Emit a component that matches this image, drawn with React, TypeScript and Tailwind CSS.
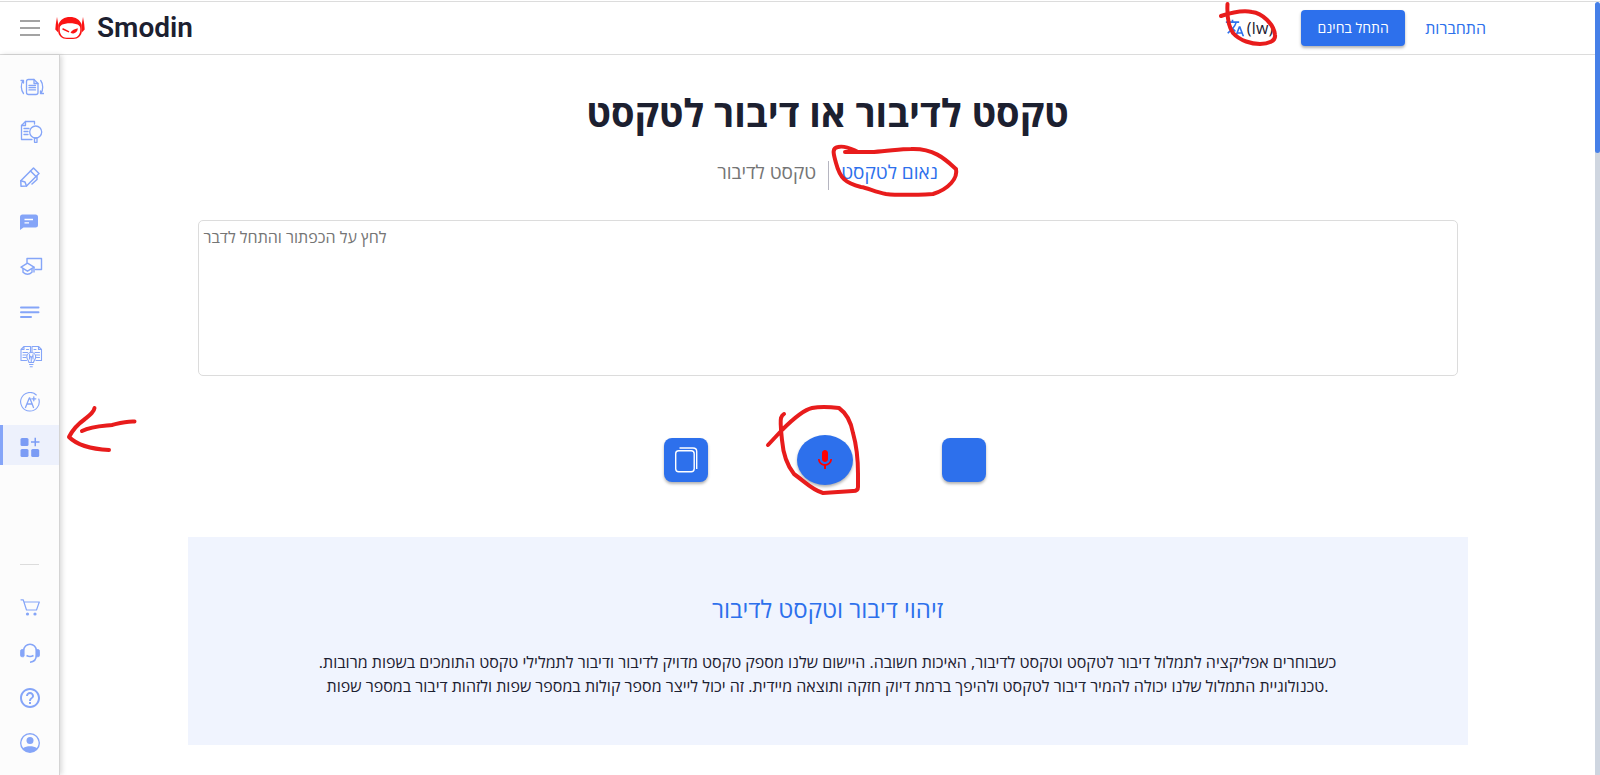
import React from 'react';
import { MdHelpOutline, MdTranslate, MdMic } from 'react-icons/md';

const LogoIcon = () => (
  <svg viewBox="0 0 30 24" className="w-[30px] h-6" fill="none">
    <path d="M2 1L3.200 8V16.500L0.300 13.500L0.800 8Z" fill="#fb1313" />
    <path d="M28 1L26.800 8V16.500L29.700 13.500L29.200 8Z" fill="#fb1313" />
    <path d="M3.200 9C5 3.500 9.500 1 15 1S25 3.500 26.800 9V15C26.800 19.500 23 23 18 23H12C7 23 3.200 19.500 3.200 15Z" fill="#fb1313" />
    <path d="M4.800 12C4.800 9.500 7.500 8.200 10.500 7.800C13.500 7.200 16.500 7.200 19.500 7.800C22.500 8.200 25.200 9.500 25.200 12C25.800 17 23.500 21.800 18.500 21.800H11.500C6.500 21.800 4.200 17 4.800 12Z" fill="#fff" />
    <path d="M8 13L13.500 15.700" stroke="#fb1313" strokeWidth="1.500" strokeLinecap="round" />
    <path d="M15.500 16.500C17 14.500 19.500 13 22.800 12.300C22.800 15 21 17.200 18.500 17.400C17.200 17.500 16.200 17.200 15.500 16.500Z" fill="#fb1313" />
  </svg>
);

const iconProps = {
  viewBox: '0 0 24 24',
  fill: 'none',
  stroke: 'currentColor',
  strokeWidth: 1.3,
  strokeLinecap: 'round' as const,
  strokeLinejoin: 'round' as const,
  className: 'w-6 h-6',
};

const RewriteIcon = () => (
  <svg {...iconProps}>
    <path d="M8.500 4.500H14L18 8.500V17.500Q18 19.500 16 19.500H8.500Q6.500 19.500 6.500 17.500V6.500Q6.500 4.500 8.500 4.500Z" />
    <path d="M14 4.500V8.500H18M9 10.500H15.500M9 12.700H15.500M9 14.900H15.500" />
    <path d="M3.500 18.500C0.700 15 0.700 9 3 5.500M1 5.500H3.500V8" />
    <path d="M20.700 5.500C23.300 9 23.300 15 21 18.500M23.500 18.500H20.500V16" />
  </svg>
);

const PlagiarismIcon = () => (
  <svg {...iconProps}>
    <path d="M14.500 4V1.500H5.500L1.500 5.500V19.500H12" />
    <path d="M5.500 1.500V5.500H1.500M4 8.500H9M4 11.500H8M4 14.500H8" />
    <circle cx="15.700" cy="12" r="6" />
    <path d="M14.500 18H17V22.300H14.500Z" />
  </svg>
);

const PencilIcon = () => (
  <svg {...iconProps} viewBox="0 0 20 20" strokeWidth={1.500} className="w-5 h-5">
    <path d="M13.500 1L19 6.500L6.500 19L1 19.200L0.800 13.800Z" />
    <path d="M10.500 4L16 9.500M0.800 13.800L5 15L6.500 19M17 9.500V12.500L12 17" />
  </svg>
);

const ChatIcon = () => (
  <svg viewBox="0 0 20 20" className="w-5 h-5">
    <path d="M2.500 2.500H15.500Q18 2.500 18 5V13Q18 15.500 15.500 15.500H3.500L0 18V5Q0 2.500 2.500 2.500Z" fill="currentColor" />
    <path d="M4.500 7.500H13M4.500 10.800H9" stroke="#fff" strokeWidth="1.300" />
  </svg>
);

const TutorIcon = () => (
  <svg {...iconProps} strokeWidth={1.400}>
    <path d="M7 7.500V3.500H21.500V14.500H15.500" />
    <path d="M1 12.200L7.500 8.200L14 12.200L7.500 16.200Z" />
    <path d="M3 14V17.200Q7.500 21.200 12 17.200V14M14 12.200V17" />
  </svg>
);

const NotesIcon = () => (
  <svg viewBox="0 0 20 20" className="w-5 h-5" stroke="currentColor" strokeWidth="2" strokeLinecap="round">
    <path d="M1 5.500H18.500M1 10.200H18.500M1 15H11" />
  </svg>
);

const ResearchIcon = () => (
  <svg {...iconProps} strokeWidth={1.100}>
    <path d="M10.500 7V1.500H4L1 4.500V15.500H6.500M4 1.500V4.500H1" />
    <path d="M12 7V1.500H18.500L21.500 4.500V15.500H16M18.500 1.500V4.500H21.500" />
    <path d="M3 7.500H7.500M3 10H6.500M3 12.500H6M15 7.500H19.500M16 10H19.500M16.500 12.500H19.500M6.500 4.500H8.500M14 4.500H16" />
    <path d="M9 17.500C9 15.500 6.800 14.500 6.800 12A4.400 4.400 0 0 1 15.700 12C15.700 14.500 13.500 15.500 13.500 17.500Z" />
    <path d="M9.500 19.500H13M10.200 21.800H12.300M11.250 17.500V12.500M9.800 11L11.250 12.500L12.700 11M9.500 9.500V14M13 9.500V14" />
  </svg>
);

const GraderIcon = () => (
  <svg {...iconProps} viewBox="0 0 20 20" strokeWidth={1.100} className="w-5 h-5">
    <path d="M16.300 3A9.300 9.300 0 1 0 18.800 7" />
    <path d="M5.500 15.500L9.300 6H9.800L13.500 15.500M6.800 12H12.300M13.800 4.800V8.800M11.800 6.800H15.800" strokeWidth="1.300" />
  </svg>
);

const AppsIcon = () => (
  <svg viewBox="0 0 20 20" className="w-5 h-5" fill="currentColor">
    <rect x="0.500" y="1" width="8" height="8" rx="1.500" />
    <rect x="0.500" y="12" width="8" height="8" rx="1.500" />
    <rect x="11.200" y="12" width="8" height="8" rx="1.500" />
    <path d="M14.500 0.800H16V4.200H19.500V5.700H16V9.200H14.500V5.700H11V4.200H14.500Z" />
  </svg>
);

const CartIcon = () => (
  <svg {...iconProps} viewBox="0 0 20 20" strokeWidth={1.200} className="w-5 h-5">
    <path d="M1 1.800H3.200L6.500 12H16.500L19.300 4H4" />
    <circle cx="7.500" cy="16" r="1.600" fill="currentColor" stroke="none" />
    <circle cx="15" cy="16" r="1.600" fill="currentColor" stroke="none" />
  </svg>
);

const SupportIcon = () => (
  <svg viewBox="0 0 20 20" className="w-5 h-5" fill="none" stroke="currentColor" strokeWidth="1.600">
    <path d="M3.700 13V7.500A6.300 6.300 0 0 1 16.300 7.500V12Q16.300 18.800 10 19.200" />
    <path d="M6.500 12.500Q10 14.500 13.500 12.500" />
    <path d="M3.700 6.500V13.800H2Q0.500 13.800 0.500 12.300V8.300Q0.500 6.500 2 6.500ZM16.300 6.500V13.800H18Q19.500 13.800 19.500 12.300V8.300Q19.500 6.500 18 6.500Z" fill="currentColor" strokeWidth="0.800" />
  </svg>
);

const AccountIcon = () => (
  <svg viewBox="0 0 20 20" className="w-5 h-5" fill="currentColor">
    <path fillRule="evenodd" d="M10 0A10 10 0 1 0 10 20A10 10 0 1 0 10 0ZM10 1.600A8.400 8.400 0 0 1 16.800 15C13.500 12.600 6.500 12.600 3.200 15A8.400 8.400 0 0 1 10 1.600Z" />
    <circle cx="10" cy="7.500" r="3.500" />
  </svg>
);

const CopyIcon = () => (
  <svg viewBox="0 0 24 26" className="w-6 h-[26px]" fill="none" stroke="#fff" strokeWidth="1.400">
    <rect x="1.700" y="3.700" width="18.500" height="21" rx="3" />
    <path d="M5.500 1H19Q22.700 1 22.700 4.500V22" />
  </svg>
);

interface NavItem {
  label: string;
  icon: React.ReactNode;
  active?: boolean;
}

const TOOLS: NavItem[] = [
  { label: 'Rewriter', icon: <RewriteIcon /> },
  { label: 'Plagiarism', icon: <PlagiarismIcon /> },
  { label: 'Writer', icon: <PencilIcon /> },
  { label: 'Chat', icon: <ChatIcon /> },
  { label: 'Tutor', icon: <TutorIcon /> },
  { label: 'Summarizer', icon: <NotesIcon /> },
  { label: 'Research', icon: <ResearchIcon /> },
  { label: 'Grader', icon: <GraderIcon /> },
  { label: 'Apps', icon: <AppsIcon />, active: true },
];

const ACCOUNT: NavItem[] = [
  { label: 'Pricing', icon: <CartIcon /> },
  { label: 'Support', icon: <SupportIcon /> },
  { label: 'Help', icon: <MdHelpOutline className="-ml-0.5 h-6 w-6" /> },
  { label: 'Account', icon: <AccountIcon /> },
];

const NavList: React.FC<{ items: NavItem[] }> = ({ items }) => (
  <ul className="flex flex-col gap-[5px]">
    {items.map(item => (
      <li key={item.label}>
        <a
          href="#"
          aria-label={item.label}
          className={
            item.active
              ? 'flex h-10 items-center border-l-[3px] border-[#85a5f8] bg-[#edf1fc] pl-[17px] pt-1 text-[#7b9cf5]'
              : 'flex h-10 items-center pl-5 pt-1 text-[#85a5f8]'
          }
        >
          {item.icon}
        </a>
      </li>
    ))}
  </ul>
);

const Header = () => (
  <header className="mt-px flex h-[54px] items-center justify-between border-y border-[#dcdcdc] bg-white pl-5 pr-[114px]">
    <div className="flex items-center">
      <button aria-label="Menu" className="flex w-5 flex-col gap-[5px]">
        <span className="h-[2px] bg-[#a3a3a3]" />
        <span className="h-[2px] bg-[#a3a3a3]" />
        <span className="h-[2px] bg-[#a3a3a3]" />
      </button>
      <a href="#" className="ml-[15px] flex items-center gap-3 font-['Roboto'] text-[28px] font-semibold text-[#1c2030]">
        <LogoIcon />
        Smodin
      </a>
    </div>
    <div className="flex items-center">
      <button className="mr-7 flex items-center gap-0.5 text-base text-[#1c2030]">
        <MdTranslate className="h-5 w-5 text-[#2d70ec]" />
        (Iw)
      </button>
      <button className="mr-5 h-9 w-[104px] rounded bg-[#2d70ec] text-sm font-medium text-white shadow-[0_2px_3px_rgba(0,0,0,0.3)]">
        התחל בחינם
      </button>
      <a href="#" className="text-base text-[#2d70ec]">התחברות</a>
    </div>
  </header>
);

// Hand-drawn red marker strokes, laid over the page
const MarkerStrokes = () => (
  <svg
    viewBox="0 0 1600 775"
    className="pointer-events-none absolute left-0 top-0 z-20 h-[775px] w-[1600px]"
    fill="none"
    stroke="#e81c1c"
    strokeWidth="4"
    strokeLinecap="round"
    strokeLinejoin="round"
  >
    <path d="M1227.500 4C1227 14 1228 26 1233 33C1240 41 1252 44 1260 44C1268 44 1276 41 1275 35C1274 24 1262 13 1252 12C1242 10 1230 13 1221 16" />
    <path d="M845 152H874C890 151 900 149 911 149C935 148 947 161 956 169C958 178 949 189 933 194C915 195 895 195 886 194C875 192 868 188 861 187C845 183 840 178 836 163C834 155 831 148 838 147C846 145 853 150 858 152" />
    <path d="M768 445L782 430C792 420 803 410 812 408C822 406 831 407 839 408C846 413 851 422 853 433C857 447 858 460 858 474V487Q858 491 853 491L823 493C812 490 804 481 794 474C786 464 783 452 782 440C781 430 780 422 781 418Q782 415 784 414" />
    <path d="M94.500 408C94 412 90 415 85 419C78 424 72 431 69 437C76 444 90 449 109 450" />
    <path d="M82 431C92 426 103 426 112 425C120 423 126 421 134.500 421.500" />
  </svg>
);

const App: React.FC = () => (
  <div className="relative flex min-h-screen flex-col overflow-hidden bg-white font-['Open_Sans',sans-serif] text-[#1c2030]">
    <Header />
    <div className="flex flex-1">
      <aside className="z-10 flex w-[60px] shrink-0 flex-col justify-between border-r border-[#d4d4d4] bg-[#fcfcfc] pb-3.5 pt-2.5 shadow-[2px_0_5px_rgba(0,0,0,0.15)]">
        <NavList items={TOOLS} />
        <div>
          <hr className="mx-5 mb-[21px] border-[#dcdcdc]" />
          <NavList items={ACCOUNT} />
        </div>
      </aside>

      <main className="flex-1 pt-8">
        <div className="mx-auto max-w-[1280px]">
          <h1 className="text-center text-[38px] font-bold leading-[50px]">טקסט לדיבור או דיבור לטקסט</h1>
          <div className="mt-6 flex h-[29px] justify-center text-[19px] leading-5">
            <button className="pb-2 pr-3 text-[#757575]">טקסט לדיבור</button>
            <button className="border-l border-[#b5b5c0] pb-2 pl-3 text-[#2d70ec]">נאום לטקסט</button>
          </div>
          <div className="mt-[30px] px-2.5">
            <textarea
              aria-label="תמלול"
              placeholder="לחץ על הכפתור והתחל לדבר"
              className="block h-[156px] w-full resize-none rounded-[5px] border border-[#dcdcdc] px-[5px] py-1 text-base leading-6 placeholder:text-[#757575]"
            />
          </div>
          <div className="mt-[59px] flex items-center justify-center gap-[89px] pr-[5px]">
            <button aria-label="העתק" className="flex h-11 w-11 items-center justify-center rounded-lg bg-[#2d70ec] shadow-[0_2px_3px_rgba(0,0,0,0.3)]">
              <CopyIcon />
            </button>
            <button aria-label="הקלט" className="flex h-[50px] w-14 items-center justify-center rounded-[50%] bg-[#2d70ec] shadow-[0_2px_3px_rgba(0,0,0,0.3)]">
              <MdMic className="h-6 w-6 text-[#fe0000]" />
            </button>
            <button aria-label="הורד" className="h-11 w-11 rounded-lg bg-[#2d70ec] shadow-[0_2px_3px_rgba(0,0,0,0.3)]" />
          </div>
          <section className="mt-[52px] bg-[#f0f4fe] px-32 pb-[47px] pt-14 text-center">
            <h2 className="text-2xl text-[#2d70ec]">זיהוי דיבור וטקסט לדיבור</h2>
            <p className="mt-[25px] text-base">
              כשבוחרים אפליקציה לתמלול דיבור לטקסט וטקסט לדיבור, האיכות חשובה. היישום שלנו מספק טקסט מדויק לדיבור ודיבור לתמלילי טקסט התומכים בשפות מרובות. טכנולוגיית התמלול שלנו יכולה להמיר דיבור לטקסט ולהיפך ברמת דיוק חזקה ותוצאה מיידית. זה יכול לייצר מספר קולות במספר שפות ולזהות דיבור במספר שפות.
            </p>
          </section>
        </div>
      </main>

      <div className="w-[5px] bg-[#cfd6e0]">
        <div className="-mt-[53px] h-[151px] rounded-full bg-[#4680e8]" />
      </div>
    </div>
    <MarkerStrokes />
  </div>
);

export default App;
